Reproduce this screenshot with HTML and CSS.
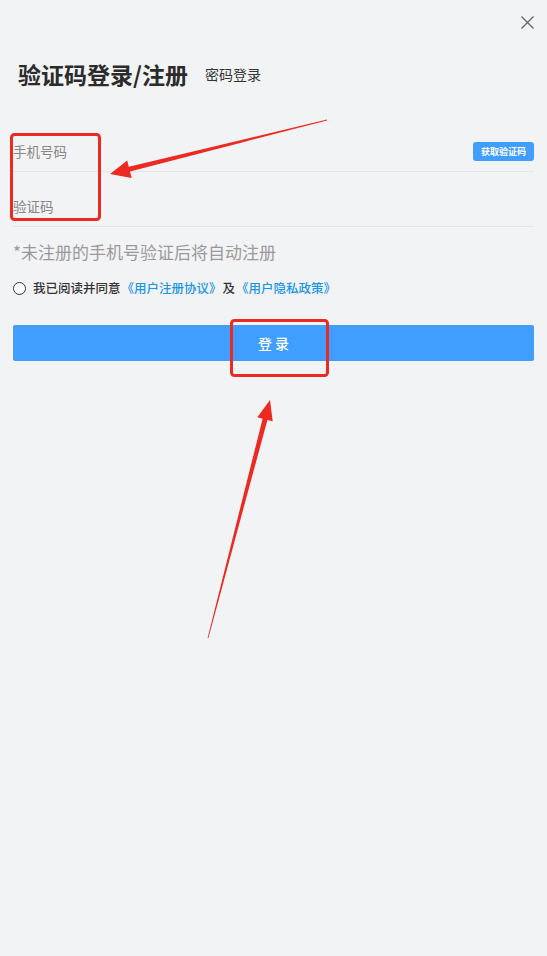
FILE: index.html
```html
<!DOCTYPE html>
<html lang="zh">
<head>
  <meta charset="UTF-8" />
  <meta name="viewport" content="width=device-width, initial-scale=1.0"/>
  <title>验证码登录</title>
  <link rel="stylesheet" href="styles.css">
</head>
<body>
  <div class="page">
    <div class="top">
      <span class="close">
        <svg width="13" height="13" viewBox="0 0 13 13"><path d="M0.5 0.5L12.5 12.5M12.5 0.5L0.5 12.5" stroke="#666" stroke-width="1.3" fill="none"/></svg>
      </span>
    </div>

    <div class="title-row">
      <h1 class="title">验证码登录/注册</h1>
      <span class="switch">密码登录</span>
    </div>

    <form class="login-form">
      <div class="row">
        <input type="tel" class="field" placeholder="手机号码" />
        <button type="button" class="code-btn">获取验证码</button>
      </div>
      <div class="row">
        <input type="text" class="field" placeholder="验证码" />
      </div>

      <p class="hint">*未注册的手机号验证后将自动注册</p>

      <label class="agree">
        <span class="radio"></span>
        我已阅读并同意<a class="link">《用户注册协议》</a>及<a class="link">《用户隐私政策》</a>
      </label>

      <button type="submit" class="submit">登 录</button>
    </form>
  </div>

  <!-- annotation marks -->
  <svg class="marks" width="547" height="956" viewBox="0 0 547 956">
    <rect x="11.5" y="134.5" width="88" height="85" rx="3" fill="none" stroke="#ec2a22" stroke-width="3"/>
    <rect x="231.5" y="320.5" width="96" height="55" rx="3" fill="none" stroke="#ec2a22" stroke-width="3"/>
    <polygon fill="#ec2a22" points="327,119.6 128.8,166.8 127.2,160.5 110,174 131.6,177.9 130,171.6 327,120.4"/>
    <polygon fill="#ec2a22" points="207.6,638 262.6,418.7 257.3,417.3 270,400 272.7,421.3 267.4,419.9 208.4,638"/>
  </svg>
</body>
</html>
```

FILE: styles.css
```css
body {
  margin: 0;
  background-color: #f2f3f5;
  font-family: "Noto Sans CJK SC", "Noto Sans", sans-serif;
  color: #333;
}
.page {
  padding: 0 13px;
}
.top {
  height: 44px;
  display: flex;
  justify-content: flex-end;
  align-items: center;
}
.close {
  display: flex;
}
.title-row {
  margin-top: 15px;
  display: flex;
  align-items: center;
  padding-left: 5px;
}
.title {
  margin: 0;
  font-size: 23px;
  line-height: 30px;
  font-weight: 700;
  color: #2b2b2b;
}
.switch {
  margin-left: 17px;
  font-size: 14px;
  color: #333;
}
.login-form {
  margin-top: 28px;
}
.row {
  display: flex;
  align-items: center;
  padding: 24px 0 10px;
  border-bottom: 1px solid #e4e5e7;
}
.field {
  flex: 1;
  border: none;
  background: transparent;
  padding: 0;
  font-family: inherit;
  font-size: 13.5px;
  line-height: 20px;
  height: 20px;
  outline: none;
}
.field::placeholder {
  color: #868686;
}
.code-btn {
  width: 61px;
  height: 19px;
  padding: 0;
  border: none;
  border-radius: 3px;
  background-color: #409eff;
  color: #fff;
  font-family: inherit;
  font-size: 9px;
  font-weight: 700;
}
.hint {
  margin: 13px 0 0;
  font-size: 17px;
  line-height: 24px;
  color: #9a9a9a;
}
.agree {
  margin-top: 14px;
  display: flex;
  align-items: center;
  font-size: 12.5px;
  line-height: 20px;
  font-weight: 500;
  color: #333;
}
.radio {
  width: 11px;
  height: 11px;
  border: 1.5px solid #333;
  border-radius: 50%;
  margin-right: 7px;
  background: #fff;
}
.link {
  margin: 0 1px;
  color: #1b95e6;
}
.submit {
  display: block;
  width: 100%;
  height: 36px;
  margin-top: 27px;
  border: none;
  border-radius: 2px;
  background-color: #409eff;
  color: #fff;
  font-family: inherit;
  font-size: 14px;
  font-weight: 500;
}
.marks {
  position: absolute;
  left: 0;
  top: 0;
  pointer-events: none;
}
```
